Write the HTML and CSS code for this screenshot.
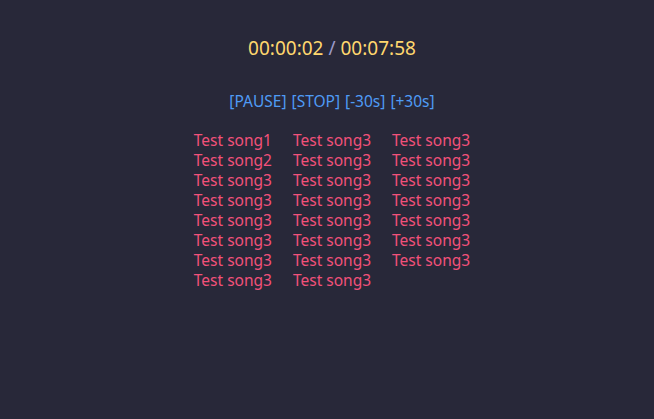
FILE: index.html
```html
<!DOCTYPE html>
<html>
<head>
<meta charset="utf-8">
<link rel="stylesheet" href="styles.css">
</head>
<body>
<main class="player">
  <div class="time"><span class="cur">00:00:02</span> <span class="sep">/</span> <span class="total">00:07:58</span></div>
  <div class="controls">
    <span class="btn">[PAUSE]</span>
    <span class="btn">[STOP]</span>
    <span class="btn">[-30s]</span>
    <span class="btn">[+30s]</span>
  </div>
  <ul class="songs">
    <li>Test song1</li>
    <li>Test song2</li>
    <li>Test song3</li>
    <li>Test song3</li>
    <li>Test song3</li>
    <li>Test song3</li>
    <li>Test song3</li>
    <li>Test song3</li>
    <li>Test song3</li>
    <li>Test song3</li>
    <li>Test song3</li>
    <li>Test song3</li>
    <li>Test song3</li>
    <li>Test song3</li>
    <li>Test song3</li>
    <li>Test song3</li>
    <li>Test song3</li>
    <li>Test song3</li>
    <li>Test song3</li>
    <li>Test song3</li>
    <li>Test song3</li>
    <li>Test song3</li>
    <li>Test song3</li>
  </ul>
</main>
</body>
</html>
```

FILE: styles.css
```css
html, body {
  margin: 0;
  padding: 0;
  height: 100%;
}
body {
  background: #282839;
  font-family: "Noto Sans", "Open Sans", sans-serif;
}
.player {
  display: flex;
  flex-direction: column;
  align-items: center;
  padding-top: 35px;
  padding-left: 10px;
}
.time {
  font-size: 19px;
  line-height: 26px;
  color: #ffd76e;
}
.time .sep {
  color: #9a9ac8;
}
.controls {
  margin-top: 30px;
  display: flex;
  gap: 5px;
  font-size: 15.5px;
  line-height: 20px;
}
.btn {
  color: #4f9bf5;
}
.songs {
  list-style: none;
  margin: 19px 0 0;
  padding: 0;
  display: grid;
  grid-template-rows: repeat(8, 20px);
  grid-auto-flow: column;
  grid-auto-columns: max-content;
  column-gap: 21px;
  font-size: 15.5px;
  line-height: 20px;
  color: #f2517a;
}
```
